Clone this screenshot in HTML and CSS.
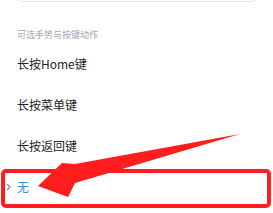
FILE: index.html
```html
<!DOCTYPE html>
<html lang="zh-CN">

<head>
    <meta charset="UTF-8">
    <meta name="viewport" content="width=device-width, initial-scale=1.0">
    <title>可选手势与按键动作</title>
    <link rel="stylesheet" href="styles.css">
</head>

<body>
    <div class="page">
        <div class="card-edge"></div>

        <div class="section-title">可选手势与按键动作</div>

        <ul class="action-list">
            <li class="action-item">长按Home键</li>
            <li class="action-item">长按菜单键</li>
            <li class="action-item">长按返回键</li>
            <li class="action-item selected">
                <svg class="chevron" width="5" height="8" viewBox="0 0 5 8">
                    <path d="M1 1 L4 4 L1 7" fill="none" stroke="#6f8fa8" stroke-width="1.2" />
                </svg>
                无
            </li>
        </ul>

        <!-- annotation drawn over the screenshot -->
        <svg class="annotation" width="273" height="213" viewBox="0 0 273 213">
            <rect x="3" y="171" width="266" height="35" rx="3" fill="none" stroke="#ff1d1d" stroke-width="4" />
            <polygon points="240,134 75,164 62,163 38,186 68,197 75,183" fill="#ff1d1d" />
        </svg>
    </div>
</body>

</html>
```

FILE: styles.css
```css
body {
    margin: 0;
    background-color: #fff;
    font-family: "Noto Sans CJK SC", "Noto Sans", sans-serif;
}

.page {
    position: relative;
    width: 273px;
    height: 213px;
    overflow: hidden;
}

.card-edge {
    height: 6px;
    margin: -5px 15px 0;
    border: 1px solid #e6e6e8;
    border-top: none;
    border-radius: 0 0 8px 8px;
}

.section-title {
    margin-top: 24px;
    padding-left: 17px;
    height: 18px;
    line-height: 18px;
    font-size: 9px;
    color: #a2a6b2;
}

.action-list {
    list-style: none;
    margin: -1px 0 0;
    padding: 0;
}

.action-item {
    display: flex;
    align-items: center;
    height: 41px;
    padding-left: 17px;
    font-size: 12px;
    color: #222;
}

.action-item.selected {
    padding-left: 6px;
    color: #3b8ec2;
}

.chevron {
    margin-right: 6px;
}

.annotation {
    position: absolute;
    left: 0;
    top: 0;
}
```
